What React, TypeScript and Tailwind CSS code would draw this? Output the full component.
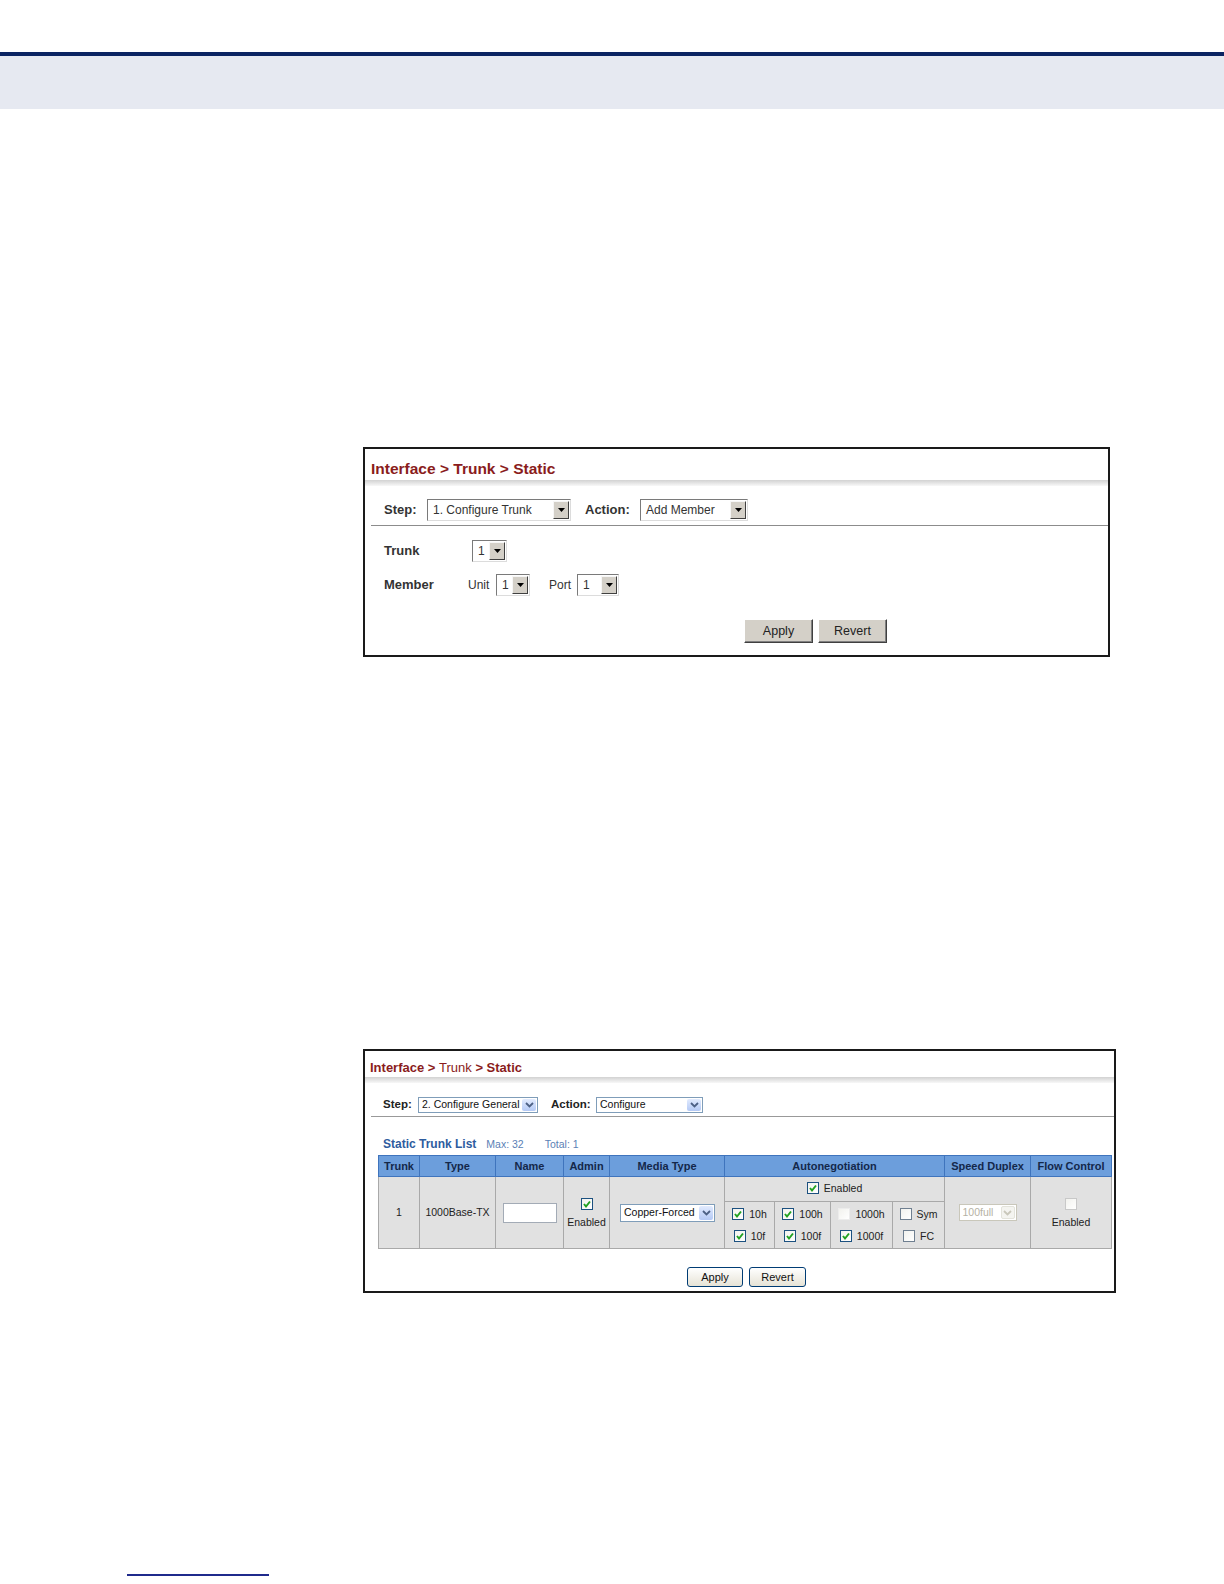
import type { ReactNode } from "react";

const FONT = "font-['Liberation_Sans',Arial,sans-serif]";

function ClassicSelect({ value, className }: { value: string; className: string }) {
  return (
    <div
      className={`flex h-[22px] items-stretch border border-t-[#7a7a7a] border-l-[#7a7a7a] border-r-[#dcdcdc] border-b-[#dcdcdc] bg-white p-[1px] ${className}`}
    >
      <span className="flex flex-1 items-center overflow-hidden whitespace-nowrap pl-[4px] text-[12px] text-[#333]">
        {value}
      </span>
      <span className="flex w-[16px] items-center justify-center border border-t-[#f6f6f6] border-l-[#f6f6f6] border-r-[#404040] border-b-[#404040] bg-[#d4d0c8]">
        <svg width="7" height="4" viewBox="0 0 7 4">
          <polygon points="0,0 7,0 3.5,4" fill="#000" />
        </svg>
      </span>
    </div>
  );
}

function ClassicButton({ children }: { children: ReactNode }) {
  return (
    <button className="flex h-[24px] w-[69px] items-center justify-center border border-t-white border-l-white border-r-[#404040] border-b-[#404040] bg-[#d4d0c8] text-[12.5px] text-[#222] shadow-[inset_-1px_-1px_0_#808080]">
      {children}
    </button>
  );
}

function XpSelect({
  value,
  className,
  disabled = false,
}: {
  value: string;
  className: string;
  disabled?: boolean;
}) {
  return (
    <div
      className={`flex items-stretch border bg-white p-[1px] ${
        disabled ? "border-[#c9c7ba]" : "border-[#7f9db9]"
      } ${className}`}
    >
      <span
        className={`flex flex-1 items-center overflow-hidden whitespace-nowrap pl-[2px] text-left text-[10.5px] ${
          disabled ? "text-[#b5b2a4]" : "text-[#111]"
        }`}
      >
        {value}
      </span>
      <span
        className={`flex w-[14px] items-center justify-center rounded-[2px] ${
          disabled
            ? "border border-[#e3e3db] bg-[#f4f4f0]"
            : "bg-linear-to-b from-[#e2ebfe] to-[#b4c9f5]"
        }`}
      >
        <svg width="9" height="6" viewBox="0 0 9 6">
          <polyline
            points="1,1 4.5,4.5 8,1"
            fill="none"
            stroke={disabled ? "#c9c7ba" : "#4d6185"}
            strokeWidth="1.8"
          />
        </svg>
      </span>
    </div>
  );
}

type Tone = "blue" | "gray" | "faint" | "light";

function Check({ checked = false, tone = "blue" }: { checked?: boolean; tone?: Tone }) {
  const border =
    tone === "blue"
      ? "border-[#1c5180]"
      : tone === "gray"
        ? "border-[#6f7f90]"
        : tone === "light"
          ? "border-[#c8c8c8]"
          : "border-[#ececec]";
  return (
    <span
      className={`flex h-[12px] w-[12px] shrink-0 items-center justify-center border bg-linear-to-br from-[#f2f2ee] to-white ${border}`}
    >
      {checked && (
        <svg width="10" height="10" viewBox="0 0 10 10">
          <polyline points="2,5 4,7.5 8,2.5" fill="none" stroke="#21a121" strokeWidth="2" />
        </svg>
      )}
    </span>
  );
}

function XpButton({ children, className }: { children: ReactNode; className: string }) {
  return (
    <button
      className={`flex h-[20px] items-center justify-center rounded-[3px] border border-[#003c74] bg-linear-to-b from-white to-[#e6e3d6] text-[11px] text-[#111] ${className}`}
    >
      {children}
    </button>
  );
}

function Opt({ checked, tone, label }: { checked?: boolean; tone?: Tone; label: string }) {
  return (
    <div className="flex h-[12px] items-center justify-center gap-[5px]">
      <Check checked={checked} tone={tone} />
      <span className="leading-[12px]">{label}</span>
    </div>
  );
}

const th =
  "border border-[#3f74bd] bg-[#6c9edc] p-0 text-center text-[11px] font-bold text-[#14284a]";
const td = "border border-[#a9a9a9] bg-[#e1e1e1] p-0 text-center align-middle";

export default function App() {
  return (
    <div className={`h-[1584px] w-[1224px] overflow-hidden bg-white pt-[52px] ${FONT}`}>
      <div className="h-[4px] bg-[#0b2462]" />
      <div className="h-[53px] bg-[#e6e9f1]" />

      {/* first screen: add member */}
      <div className="ml-[363px] mt-[338px] w-[747px] border-2 border-[#1a1a1a]">
        <div className="h-[31px] pl-[6px] pt-[12px] text-[15.5px] font-bold leading-[16px] text-[#8a1c1c]">
          Interface &gt; Trunk &gt; Static
        </div>
        <div className="h-[6px] bg-linear-to-b from-[#d2d2d2] to-[#f8f8f8]" />
        <div className="flex items-center pb-[4px] pl-[19px] pt-[13px]">
          <span className="w-[43px] text-[13px] font-bold text-[#333]">Step:</span>
          <ClassicSelect value="1. Configure Trunk" className="w-[144px]" />
          <span className="ml-[14px] w-[55px] text-[13px] font-bold text-[#333]">Action:</span>
          <ClassicSelect value="Add Member" className="w-[108px]" />
        </div>
        <div className="ml-[6px] h-[1px] bg-[#8c8c8c]" />
        <div className="mt-[14px] flex items-center pl-[19px]">
          <span className="w-[88px] text-[13px] font-bold text-[#333]">Trunk</span>
          <ClassicSelect value="1" className="w-[35px]" />
        </div>
        <div className="mt-[12px] flex items-center pl-[19px]">
          <span className="w-[84px] text-[13px] font-bold text-[#333]">Member</span>
          <span className="w-[28px] text-[12px] text-[#333]">Unit</span>
          <ClassicSelect value="1" className="w-[34px]" />
          <span className="ml-[19px] w-[28px] text-[12px] text-[#333]">Port</span>
          <ClassicSelect value="1" className="w-[42px]" />
        </div>
        <div className="mt-[23px] flex gap-[5px] pb-[12px] pl-[379px]">
          <ClassicButton>Apply</ClassicButton>
          <ClassicButton>Revert</ClassicButton>
        </div>
      </div>

      {/* second screen: configure general */}
      <div className="ml-[363px] mt-[392px] w-[753px] border-2 border-[#1a1a1a]">
        <div className="h-[26px] pl-[5px] pt-[10px] text-[13px] font-bold leading-[14px] text-[#8a1c1c]">
          Interface &gt; <span className="font-normal">Trunk</span> &gt; Static
        </div>
        <div className="h-[6px] bg-linear-to-b from-[#d2d2d2] to-[#f8f8f8]" />
        <div className="flex items-center pb-[3px] pl-[18px] pt-[13px]">
          <span className="w-[35px] text-[11.5px] font-bold text-[#222]">Step:</span>
          <XpSelect value="2. Configure General" className="h-[16px] w-[120px]" />
          <span className="ml-[13px] w-[45px] text-[11.5px] font-bold text-[#222]">Action:</span>
          <XpSelect value="Configure" className="h-[16px] w-[107px]" />
        </div>
        <div className="ml-[6px] h-[1px] bg-[#999]" />
        <div className="flex h-[34px] items-end pl-[18px] leading-[14px]">
          <span className="text-[12px] font-bold text-[#2e5c9e]">Static Trunk List</span>
          <span className="ml-[10px] text-[10.5px] text-[#5b7fb5]">Max: 32</span>
          <span className="ml-[21px] text-[10.5px] text-[#5b7fb5]">Total: 1</span>
        </div>

        <table className="ml-[13px] mt-[4px] w-[733px] table-fixed border-collapse text-[10.5px] text-[#222]">
          <colgroup>
            <col className="w-[41px]" />
            <col className="w-[76px]" />
            <col className="w-[68px]" />
            <col className="w-[46px]" />
            <col className="w-[115px]" />
            <col className="w-[50px]" />
            <col className="w-[56px]" />
            <col className="w-[62px]" />
            <col className="w-[52px]" />
            <col className="w-[86px]" />
            <col className="w-[81px]" />
          </colgroup>
          <thead>
            <tr className="h-[21px]">
              <th className={th}>Trunk</th>
              <th className={th}>Type</th>
              <th className={th}>Name</th>
              <th className={th}>Admin</th>
              <th className={th}>Media Type</th>
              <th className={th} colSpan={4}>
                Autonegotiation
              </th>
              <th className={th}>Speed Duplex</th>
              <th className={th}>Flow Control</th>
            </tr>
          </thead>
          <tbody>
            <tr className="h-[25px]">
              <td className={td} rowSpan={2}>
                1
              </td>
              <td className={td} rowSpan={2}>
                1000Base-TX
              </td>
              <td className={td} rowSpan={2}>
                <div className="flex justify-center">
                  <div className="h-[20px] w-[54px] border border-[#a3abb6] bg-white" />
                </div>
              </td>
              <td className={td} rowSpan={2}>
                <div className="flex flex-col items-center gap-[6px]">
                  <Check checked />
                  <span className="leading-[12px]">Enabled</span>
                </div>
              </td>
              <td className={td} rowSpan={2}>
                <div className="flex justify-end pr-[9px]">
                  <XpSelect value="Copper-Forced" className="h-[18px] w-[95px]" />
                </div>
              </td>
              <td className={`${td} pb-[3px]`} colSpan={4}>
                <Opt checked label="Enabled" />
              </td>
              <td className={td} rowSpan={2}>
                <div className="flex justify-center">
                  <XpSelect value="100full" className="h-[17px] w-[58px]" disabled />
                </div>
              </td>
              <td className={td} rowSpan={2}>
                <div className="flex flex-col items-center gap-[6px]">
                  <Check tone="light" />
                  <span className="leading-[12px]">Enabled</span>
                </div>
              </td>
            </tr>
            <tr className="h-[47px]">
              <td className={td}>
                <div className="flex flex-col gap-[10px]">
                  <Opt checked label="10h" />
                  <Opt checked label="10f" />
                </div>
              </td>
              <td className={td}>
                <div className="flex flex-col gap-[10px]">
                  <Opt checked label="100h" />
                  <Opt checked label="100f" />
                </div>
              </td>
              <td className={td}>
                <div className="flex flex-col gap-[10px]">
                  <Opt tone="faint" label="1000h" />
                  <Opt checked label="1000f" />
                </div>
              </td>
              <td className={td}>
                <div className="flex flex-col gap-[10px]">
                  <Opt tone="gray" label="Sym" />
                  <Opt tone="gray" label="FC" />
                </div>
              </td>
            </tr>
          </tbody>
        </table>

        <div className="mt-[18px] flex gap-[6px] pb-[4px] pl-[322px]">
          <XpButton className="w-[56px]">Apply</XpButton>
          <XpButton className="w-[57px]">Revert</XpButton>
        </div>
      </div>

      <div className="ml-[127px] mt-[281px] h-[2px] w-[142px] bg-[#1f2a8c]" />
    </div>
  );
}
